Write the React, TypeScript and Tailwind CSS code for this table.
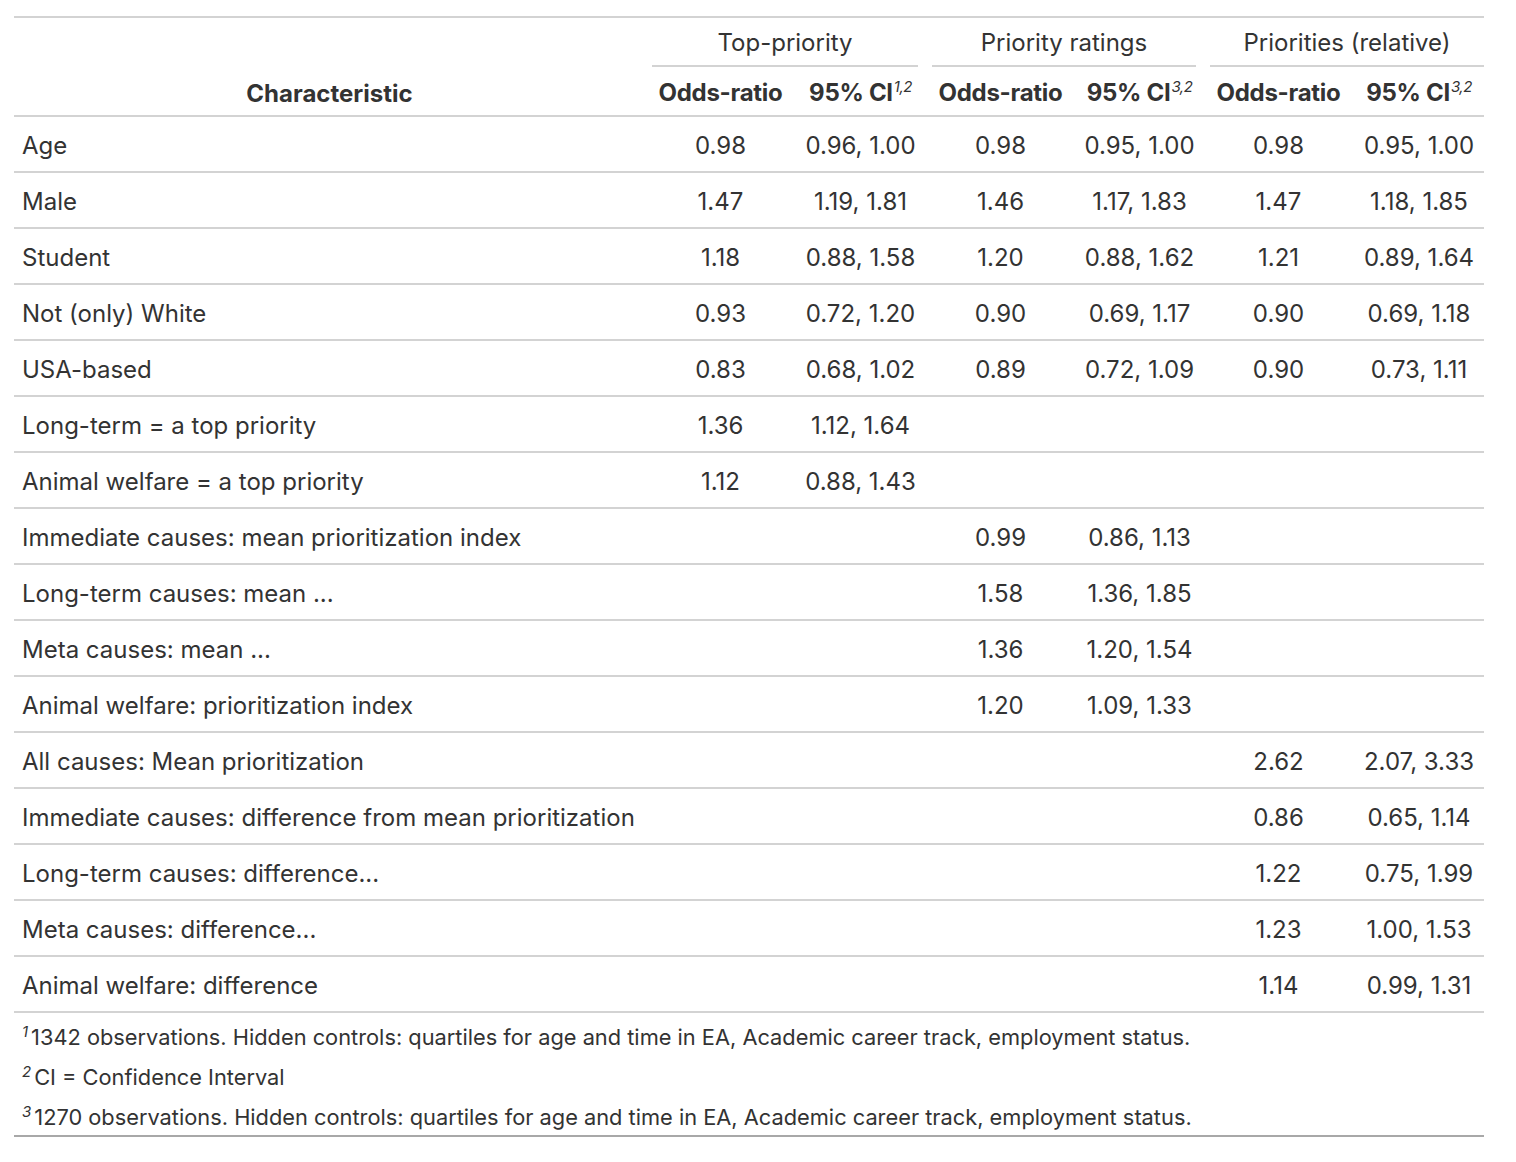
const rows: [string, string, string, string, string, string, string][] = [
  ['Age', '0.98', '0.96, 1.00', '0.98', '0.95, 1.00', '0.98', '0.95, 1.00'],
  ['Male', '1.47', '1.19, 1.81', '1.46', '1.17, 1.83', '1.47', '1.18, 1.85'],
  ['Student', '1.18', '0.88, 1.58', '1.20', '0.88, 1.62', '1.21', '0.89, 1.64'],
  ['Not (only) White', '0.93', '0.72, 1.20', '0.90', '0.69, 1.17', '0.90', '0.69, 1.18'],
  ['USA-based', '0.83', '0.68, 1.02', '0.89', '0.72, 1.09', '0.90', '0.73, 1.11'],
  ['Long-term = a top priority', '1.36', '1.12, 1.64', '', '', '', ''],
  ['Animal welfare = a top priority', '1.12', '0.88, 1.43', '', '', '', ''],
  ['Immediate causes: mean prioritization index', '', '', '0.99', '0.86, 1.13', '', ''],
  ['Long-term causes: mean ...', '', '', '1.58', '1.36, 1.85', '', ''],
  ['Meta causes: mean ...', '', '', '1.36', '1.20, 1.54', '', ''],
  ['Animal welfare: prioritization index', '', '', '1.20', '1.09, 1.33', '', ''],
  ['All causes: Mean prioritization', '', '', '', '', '2.62', '2.07, 3.33'],
  ['Immediate causes: difference from mean prioritization', '', '', '', '', '0.86', '0.65, 1.14'],
  ['Long-term causes: difference...', '', '', '', '', '1.22', '0.75, 1.99'],
  ['Meta causes: difference...', '', '', '', '', '1.23', '1.00, 1.53'],
  ['Animal welfare: difference', '', '', '', '', '1.14', '0.99, 1.31'],
]

const footnotes = [
  ['1', '1342 observations. Hidden controls: quartiles for age and time in EA, Academic career track, employment status.'],
  ['2', 'CI = Confidence Interval'],
  ['3', '1270 observations. Hidden controls: quartiles for age and time in EA, Academic career track, employment status.'],
]

function Sup({ children }: { children: string }) {
  return <span className="relative -top-[9px] italic text-[15px] font-normal leading-none ml-[1px] tracking-[-0.5px]">{children}</span>
}

export default function App() {
  return (
    <div className="min-h-[1162px] bg-white pt-4 pl-[14px]" style={{ fontFamily: 'Inter, "Noto Sans", sans-serif' }}>
      <table className="table-fixed border-collapse text-[#333333] text-[24px] w-[1470px] border-t-2 border-b-2 border-t-[#d3d3d3] border-b-[#a8a8a8]">
        <colgroup>
          <col className="w-[631px]" />
          <col className="w-[151px]" />
          <col className="w-[129px]" />
          <col className="w-[151px]" />
          <col className="w-[127px]" />
          <col className="w-[151px]" />
          <col className="w-[130px]" />
        </colgroup>
        <thead>
          <tr>
            <th rowSpan={2} className="align-bottom text-center font-bold pb-[6px] leading-[30px] border-b-2 border-[#d3d3d3]">
              Characteristic
            </th>
            {['Top-priority', 'Priority ratings', 'Priorities (relative)'].map((g, i) => (
              <th key={g} colSpan={2} className={`font-normal pt-[10px] pb-0 ${i === 2 ? 'pl-[7px]' : 'px-[7px]'}`}>
                <div className="border-b-2 border-[#d3d3d3] pb-[7px] leading-[30px]">{g}</div>
              </th>
            ))}
          </tr>
          <tr className="border-b-2 border-[#d3d3d3]">
            {['1,2', '3,2', '3,2'].map((s, i) => [
              <th key={'or' + i} className="font-bold h-[49px] pt-[4px] leading-[30px] whitespace-nowrap text-center tracking-[-0.3px]">Odds-ratio</th>,
              <th key={'ci' + i} className="font-bold pt-[4px] leading-[30px] whitespace-nowrap text-center tracking-[-0.3px]">
                95% CI<Sup>{s}</Sup>
              </th>,
            ])}
          </tr>
        </thead>
        <tbody>
          {rows.map((r) => (
            <tr key={r[0]} className="border-b-2 border-[#d3d3d3] h-[56px]">
              <td className="pl-2 pt-[4px] pb-0 text-left">{r[0]}</td>
              {r.slice(1).map((v, j) => (
                <td key={j} className="pt-[4px] pb-0 text-center whitespace-nowrap">{v}</td>
              ))}
            </tr>
          ))}
        </tbody>
        <tfoot>
          {footnotes.map(([n, t], i) => (
            <tr key={n}>
              <td colSpan={7} className={`text-[21.8px] px-2 leading-[28px] ${i === 0 ? 'pt-[10px] pb-[6px]' : i === 2 ? 'pt-[6px] pb-[4px]' : 'py-[6px]'}`}>
                <span className="relative -top-[8px] italic text-[15px] leading-none mr-[3px]">{n}</span>
                {t}
              </td>
            </tr>
          ))}
        </tfoot>
      </table>
    </div>
  )
}
